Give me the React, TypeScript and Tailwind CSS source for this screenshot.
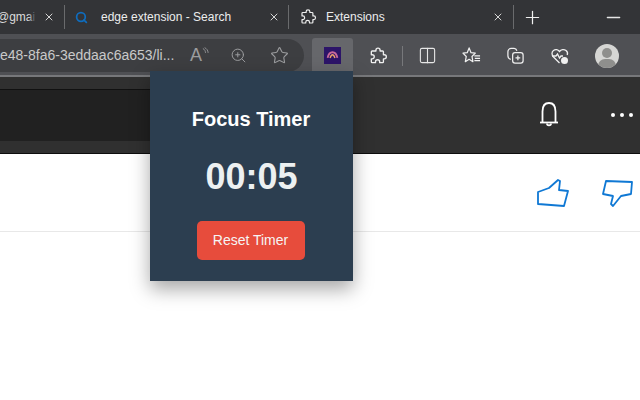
import React from 'react';
import { X, Plus, Minus, Search, ZoomIn, Star, Columns2 } from 'lucide-react';

const font = { fontFamily: '"Liberation Sans", Arial, sans-serif' };

function Ext({ className }: { className?: string }) {
  return (
    <svg viewBox="0 0 24 24" fill="none" stroke="currentColor" strokeWidth="1.600" strokeLinejoin="round" className={className}>
      <path d="M9.500 6V5a2.500 2.500 0 0 1 5 0v1h3a1 1 0 0 1 1 1v3.500h1a2.500 2.500 0 0 1 0 5h-1V19a1 1 0 0 1-1 1h-3.500v-1a2.500 2.500 0 0 0-5 0v1H5a1 1 0 0 1-1-1v-3.500h1a2.500 2.500 0 0 0 0-5H4V7a1 1 0 0 1 1-1z" />
    </svg>
  );
}

export default function App() {
  return (
    <div className="relative w-[640px] h-[400px] overflow-hidden bg-white" style={font}>
      {/* tab strip */}
      <div className="flex items-center h-[34px] bg-[#333437] overflow-hidden">
        <div className="relative w-[36px] shrink-0 overflow-hidden">
          <span className="block -ml-[3px] text-[12px] text-[#dcdcdc] whitespace-nowrap">@gmai</span>
          <div className="absolute right-0 top-0 bottom-0 w-[8px] bg-gradient-to-r from-transparent to-[#333437]" />
        </div>
        <X className="shrink-0 w-[12px] h-[12px] text-[#e6e6e6] ml-[7px]" strokeWidth={1.8} />
        <div className="shrink-0 w-px h-[24px] bg-[#6a6b6d] ml-[9px]" />

        <Search className="shrink-0 w-[13px] h-[13px] text-[#0f6cbd] ml-[10px] mr-[13px]" strokeWidth={3.2} />
        <span className="shrink-0 w-[130px] text-[12px] text-[#eceded] whitespace-nowrap">edge extension - Search</span>
        <X className="shrink-0 w-[12px] h-[12px] text-[#e6e6e6] ml-[37px]" strokeWidth={1.8} />
        <div className="shrink-0 w-px h-[24px] bg-[#6a6b6d] ml-[8px]" />

        <Ext className="shrink-0 w-[18px] h-[18px] text-[#eeeeee] ml-[10px] mr-[9px]" />
        <span className="shrink-0 w-[60px] text-[12px] text-[#eceded] whitespace-nowrap">Extensions</span>
        <X className="shrink-0 w-[12px] h-[12px] text-[#e6e6e6] ml-[106px]" strokeWidth={1.8} />
        <div className="shrink-0 w-px h-[24px] bg-[#6a6b6d] ml-[9px]" />

        <Plus className="shrink-0 w-[21px] h-[21px] text-[#f0f0f0] ml-[8px]" strokeWidth={1.4} />
        <Minus className="shrink-0 w-[21px] h-[21px] text-[#e6e6e6] ml-[60px]" strokeWidth={1.6} />
      </div>

      {/* toolbar */}
      <div className="flex items-center h-[43px] pt-[2px] bg-[#4f5054] border-b-[2px] border-b-[#77787b]">
        <div className="flex items-center w-[304px] h-[33px] shrink-0 rounded-r-[17px] bg-[#3d3e41]">
          <span className="text-[14px] text-[#c9c9c9] whitespace-nowrap w-[176px] shrink-0">e48-8fa6-3eddaac6a653/li...</span>
          <span className="text-[18px] font-light text-[#9b9c9e] ml-[14px]">A</span>
          <svg viewBox="0 0 8 10" fill="none" stroke="#9b9c9e" className="w-[7px] h-[10px] mb-[8px]">
            <path d="M1 1c2 1 3 3 3 5M3 0c2 1 4 3 4 6" />
          </svg>
          <ZoomIn className="w-[17px] h-[17px] text-[#9b9c9e] ml-[21px]" strokeWidth={1.4} />
          <Star className="w-[19px] h-[19px] text-[#9b9c9e] ml-[23px]" strokeWidth={1.4} />
        </div>
        <div className="flex items-center justify-center w-[41px] h-[36px] ml-[8px] bg-[#66676b] rounded-t-[3px]">
          <div className="flex items-center justify-center w-[17px] h-[17px] bg-[#2c1468]">
            <svg viewBox="0 0 16 16" fill="none" className="w-[13px] h-[13px]">
              <path d="M2 11c1-5 4-7 6-7s5 2 6 7" stroke="#c9699b" strokeWidth="2.200" />
              <path d="M5 11c1-3 2-4 3-4s2 1 3 4" stroke="#e8a06a" strokeWidth="1.800" />
            </svg>
          </div>
        </div>
        <Ext className="w-[20px] h-[20px] text-[#f0f0f0] ml-[15px]" />
        <div className="w-px h-[20px] bg-[#77787b] ml-[14px]" />
        <Columns2 className="w-[19px] h-[19px] text-[#e6e6e6] ml-[15px]" strokeWidth={1.4} />
        <svg viewBox="0 0 20 20" fill="none" stroke="#f0f0f0" strokeWidth="1.300" strokeLinejoin="round" className="w-[19px] h-[19px] ml-[25px]">
          <path d="M7.500 2 9.500 7 14 7.500 10.500 11 11.500 16.500 7.500 14 3.500 16.500 4.500 11 1 7.500 5.500 7z" />
          <path d="M13 10.500h6M13.500 13h5.500M13 15.500h6" />
        </svg>
        <svg viewBox="0 0 20 20" fill="none" stroke="#f0f0f0" strokeWidth="1.300" className="w-[19px] h-[19px] ml-[25px]">
          <rect x="7" y="7" width="11" height="11" rx="2.500" />
          <path d="M10 12.500h5M12.500 10v5M5 14c-2-.5-3-2-3-4V6c0-2 1.500-3.500 3.500-3.500h3c1.500 0 2.500 1 3 2.500" />
        </svg>
        <svg viewBox="0 0 20 20" fill="none" stroke="#f0f0f0" strokeWidth="1.300" className="w-[20px] h-[20px] ml-[25px]">
          <path d="M9.500 17 3.500 11C1.500 9 1.500 6 3.500 4.500 5.500 3 8 3.500 9.500 5.500 11 3.500 14 3 16 4.500c1.500 1.200 1.800 3 1.200 4.500" />
          <path d="M2 10h4l1.500-2 2 4 1.500-2h2" />
          <circle cx="14.500" cy="14.500" r="3.500" fill="#f0f0f0" stroke="none" />
        </svg>
        <div className="relative w-[24px] h-[24px] ml-[25px] rounded-full bg-[#d6d6d4] overflow-hidden">
          <div className="absolute left-[7px] top-[4px] w-[10px] h-[10px] rounded-full bg-[#8f8f8d]" />
          <div className="absolute left-[3px] top-[15px] w-[18px] h-[14px] rounded-full bg-[#8f8f8d]" />
        </div>
      </div>

      {/* page header */}
      <div className="flex items-center h-[77px] bg-[#303030] border-b border-b-[#0d0d0d]">
        <div className="w-[200px] h-[52px] shrink-0 bg-[#212121] border-t border-t-[#111111]" />
        <div className="flex-1" />
        <svg viewBox="0 0 20 26" fill="none" stroke="#ffffff" strokeWidth="1.800" className="shrink-0 w-[20px] h-[26px]">
          <path d="M3.500 20V9.500C3.500 4 6 1 10 1s6.500 3 6.500 8.500V20" />
          <path d="M1 20.500h18" />
          <path d="M8 21.500c0 2.500 4 2.500 4 0" />
        </svg>
        <div className="flex gap-[5px] ml-[52px] mr-[7px]">
          <div className="w-[4px] h-[4px] rounded-full bg-white" />
          <div className="w-[4px] h-[4px] rounded-full bg-white" />
          <div className="w-[4px] h-[4px] rounded-full bg-white" />
        </div>
      </div>

      {/* page body */}
      <div className="flex items-center justify-end h-[78px] border-b border-b-[#e8e8e8] gap-[33px] pr-[6px]">
        <svg viewBox="0 0 32 29" fill="none" stroke="#0f78d4" strokeWidth="1.800" strokeLinejoin="round" className="w-[32px] h-[29px]">
          <path d="M1 14 12 10 21 2 23 3 22 12 31 13 27 28 1 26z" />
        </svg>
        <svg viewBox="0 0 32 29" fill="none" stroke="#0f78d4" strokeWidth="1.800" strokeLinejoin="round" className="w-[32px] h-[29px] mt-[4px]">
          <path d="M4 1 30 2 29 14 19 16 11 26 9 24 11 16 1 14z" />
        </svg>
      </div>

      {/* popup */}
      <div className="absolute left-[150px] top-[71px] w-[203px] h-[210px] flex flex-col items-center bg-[#2c3e50] shadow-[0_8px_18px_rgba(0,0,0,0.35)]">
        <h1 className="mt-[36px] mr-[1px] text-[20px] leading-[24px] font-bold text-white">Focus Timer</h1>
        <div className="mt-[24px] text-[36px] leading-[44px] font-bold text-[#ecf0f1]">00:05</div>
        <button className="mt-[22px] mr-[2px] w-[108px] h-[39px] rounded-[5px] bg-[#e74c3c] text-[14px] text-[#f5f5f5]">Reset Timer</button>
      </div>
    </div>
  );
}
